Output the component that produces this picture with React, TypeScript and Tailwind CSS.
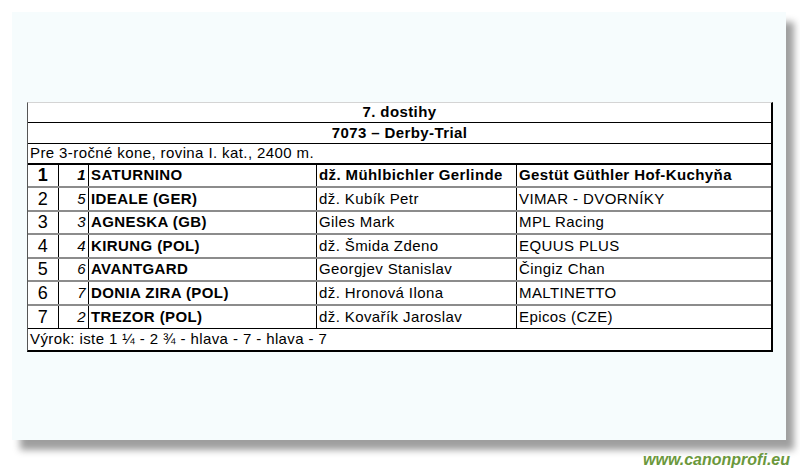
import React from 'react';

type Row = {
  place: string;
  no: string;
  horse: string;
  jockey: string;
  owner: string;
  h: string;
  bold?: boolean;
};

const rows: Row[] = [
  { place: '1', no: '1', horse: 'SATURNINO', jockey: 'dž. Mühlbichler Gerlinde', owner: 'Gestüt Güthler Hof-Kuchyňa', h: 'h-[23px]', bold: true },
  { place: '2', no: '5', horse: 'IDEALE (GER)', jockey: 'dž. Kubík Petr', owner: 'VIMAR - DVORNÍKY', h: 'h-[24px]' },
  { place: '3', no: '3', horse: 'AGNESKA (GB)', jockey: 'Giles Mark', owner: 'MPL Racing', h: 'h-[23px]' },
  { place: '4', no: '4', horse: 'KIRUNG (POL)', jockey: 'dž. Šmida Zdeno', owner: 'EQUUS PLUS', h: 'h-[24px]' },
  { place: '5', no: '6', horse: 'AVANTGARD', jockey: 'Georgjev Stanislav', owner: 'Čingiz Chan', h: 'h-[23px]' },
  { place: '6', no: '7', horse: 'DONIA ZIRA (POL)', jockey: 'dž. Hronová Ilona', owner: 'MALTINETTO', h: 'h-[24px]' },
  { place: '7', no: '2', horse: 'TREZOR (POL)', jockey: 'dž. Kovařík Jaroslav', owner: 'Epicos (CZE)', h: 'h-[23px]' },
];

function ResultRow({ r, last }: { r: Row; last: boolean }) {
  const weight = r.bold ? 'font-bold' : 'font-normal';
  return (
    <div
      className={`flex ${r.h} ${last ? 'border-b border-black' : 'border-b-2 border-[#8c8c8c]'}`}
    >
      <div className={`w-[31px] shrink-0 border-r border-black flex items-center justify-center text-[18px] ${weight}`}>
        {r.place}
      </div>
      <div className={`w-[30px] shrink-0 border-r border-black flex items-center justify-end pr-[2px] italic ${weight}`}>
        {r.no}
      </div>
      <div className="w-[228px] shrink-0 border-r border-black flex items-center pl-[2px] font-bold">
        {r.horse}
      </div>
      <div className={`w-[200px] shrink-0 border-r border-black flex items-center pl-[2px] ${weight}`}>
        {r.jockey}
      </div>
      <div className={`flex-1 flex items-center pl-[2px] ${weight}`}>{r.owner}</div>
    </div>
  );
}

export default function App() {
  return (
    <div className="w-[800px] h-[470px] bg-white overflow-hidden pt-[12px] pl-[12px] font-['Liberation_Sans',Arial,sans-serif] text-black text-[15px] tracking-[0.4px]">
      <div className="w-[774px] h-[428px] bg-[#f6fcfd] shadow-[8px_10px_7px_rgba(0,0,0,0.38)] pt-[90px] pl-[15px]">
        <div className="w-[746px] bg-white border-t border-t-[#d4d4d4] border-l border-l-[#555] border-r-2 border-r-black border-b-2 border-b-black">
          <div className="h-[20px] flex items-center justify-center font-bold border-b border-black">
            7. dostihy
          </div>
          <div className="h-[21px] flex items-center justify-center font-bold border-b border-black">
            7073 – Derby-Trial
          </div>
          <div className="h-[21px] flex items-center pl-[2px] border-b-2 border-black">
            Pre 3-ročné kone, rovina I. kat., 2400 m.
          </div>
          {rows.map((r, i) => (
            <ResultRow key={r.place} r={r} last={i === rows.length - 1} />
          ))}
          <div className="h-[21px] flex items-center pl-[2px]">
            Výrok: iste 1 ¼ - 2 ¾ - hlava - 7 - hlava - 7
          </div>
        </div>
      </div>
      <div className="w-[778px] text-right mt-[11px] text-[16px] leading-[18px] tracking-normal font-bold italic text-[#6b983c]">
        www.canonprofi.eu
      </div>
    </div>
  );
}
